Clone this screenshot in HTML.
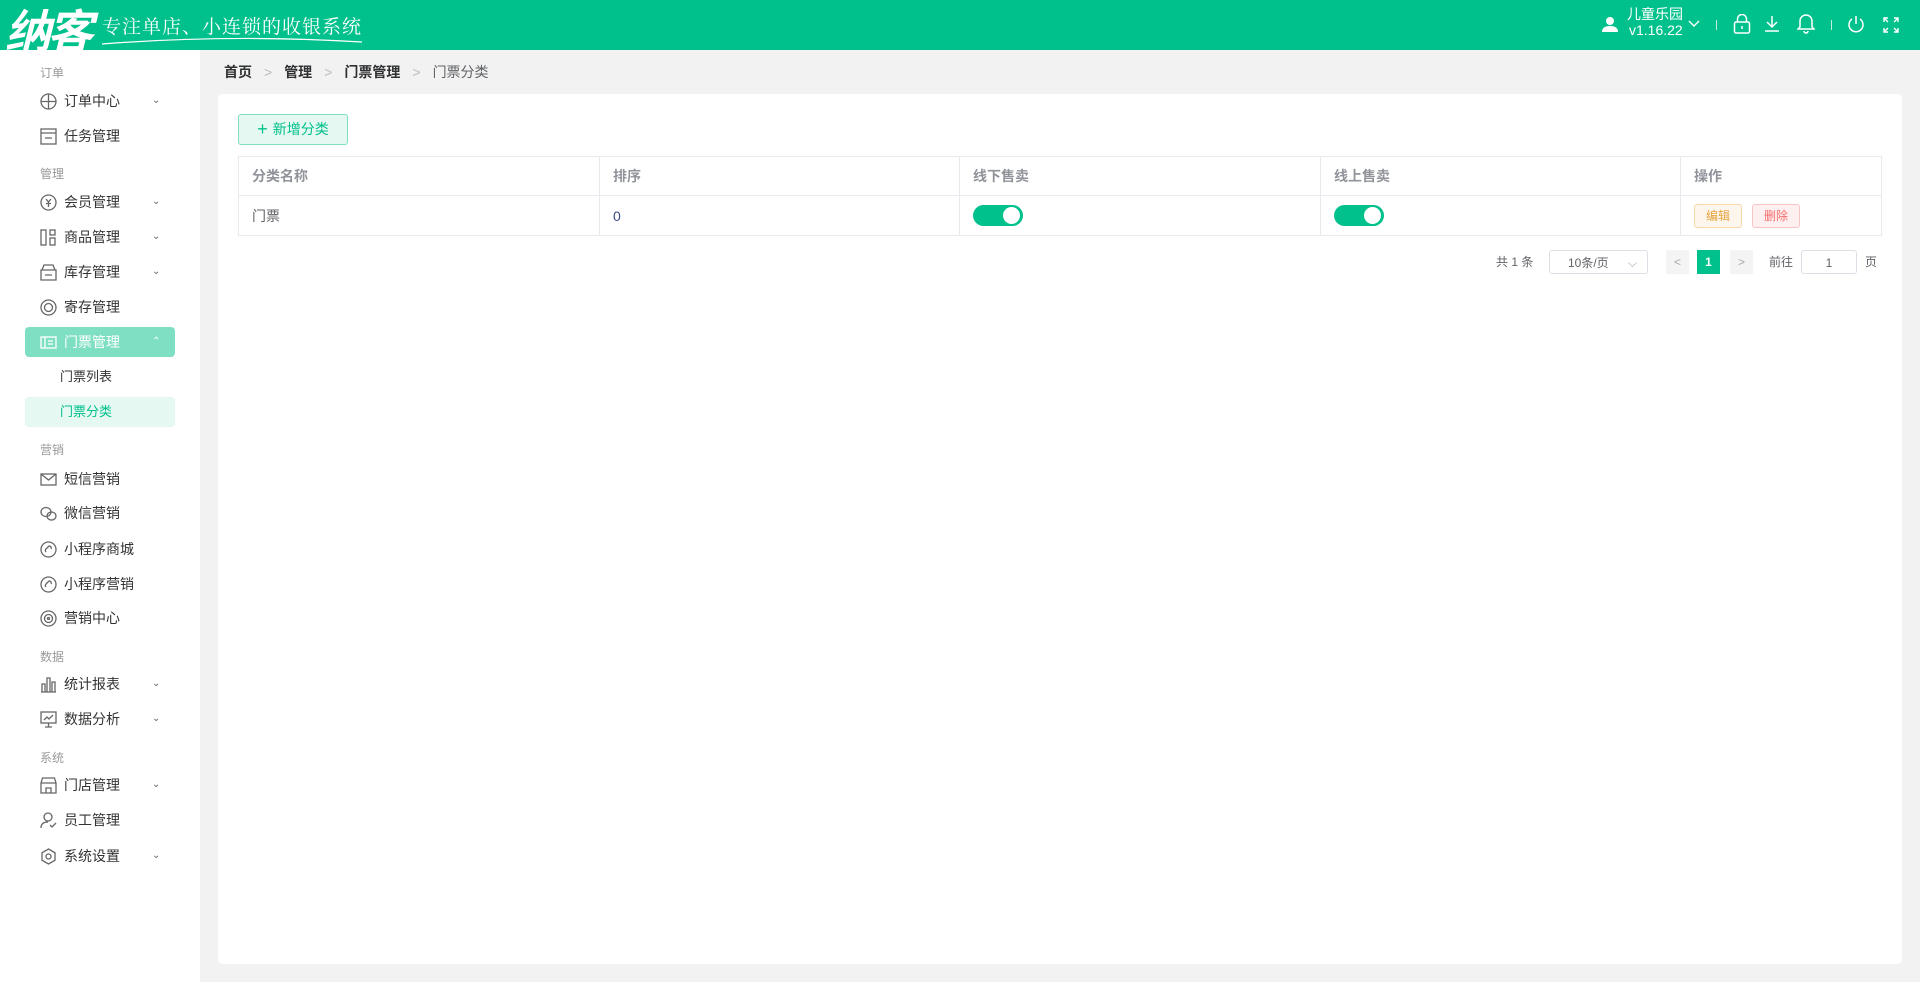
<!DOCTYPE html>
<html><head><meta charset="utf-8"><style>
*{margin:0;padding:0;box-sizing:border-box}
body{width:1920px;height:982px;overflow:hidden;background:#f2f2f2;font-family:"Liberation Sans","Noto Sans CJK SC",sans-serif;font-size:14px;color:#333;position:relative}
.hd{position:absolute;left:0;top:0;width:1920px;height:50px;background:#00c08b;color:#fff}
.abs{position:absolute}
.sb{position:absolute;left:0;top:50px;width:200px;height:932px;background:#fff}
.lbl{position:absolute;left:40px;font-size:12px;color:#999}
.it{position:absolute;left:40px;width:140px;height:30px;line-height:30px;font-size:14px;color:#333}
.it svg{position:absolute;left:0;top:7px}
.it span{position:absolute;left:24px}
.it i{position:absolute;left:112px;top:0;font-style:normal;font-size:10px;color:#666}
.card{position:absolute;left:218px;top:94px;width:1684px;height:870px;background:#fff;border-radius:4px}
table{position:absolute;left:238px;top:156px;width:1644px;border-collapse:collapse}
td,th{border:1px solid #e8eaf0;text-align:left;padding-left:13px;font-size:14px}
th{height:39px;color:#909399;font-weight:bold}
td{height:40px;color:#606266}
.sw{display:inline-block;width:50px;height:21px;border-radius:11px;background:#00c08b;position:relative;vertical-align:middle}
.sw:after{content:"";position:absolute;right:3px;top:2px;width:17px;height:17px;border-radius:50%;background:#fff}
.bt{display:inline-block;height:24px;line-height:22px;padding:0 11px;font-size:12px;border-radius:3px;margin-right:10px}
.pg{position:absolute;top:250px;height:24px;line-height:24px;font-size:12px;color:#606266}
.sep{color:#bbb;margin:0 12px;font-weight:normal}
</style></head><body>
<div class="hd">
 <div class="abs" style="left:5px;top:-4px;font-size:46px;font-weight:bold;font-style:italic;letter-spacing:-4px;font-family:'Noto Sans CJK SC',sans-serif">纳客</div>
 <div class="abs" style="left:102px;top:12px;font-size:19px;letter-spacing:1px;font-family:'Noto Serif CJK SC',serif">专注单店、小连锁的收银系统</div>
 <svg class="abs" style="left:100px;top:36px" width="265" height="10"><path d="M2 8 Q130 -2 262 6" stroke="#fff" stroke-width="1.2" fill="none"/></svg>
 <svg class="abs" style="left:1602px;top:16px" width="16" height="16" viewBox="0 0 16 16" fill="#fff"><circle cx="8" cy="5" r="4"/><path d="M0 16 Q0 10 8 10 Q16 10 16 16Z"/></svg>
 <div class="abs" style="left:1627px;top:6px;font-size:14px;line-height:16px">儿童乐园</div>
 <div class="abs" style="left:1629px;top:22px;font-size:14px;line-height:16px">v1.16.22</div>
 <svg class="abs" style="left:1688px;top:20px" width="12" height="8"><path d="M1 1 L6 6 L11 1" stroke="#fff" fill="none" stroke-width="1.4"/></svg>
 <div class="abs" style="left:1716px;top:20px;width:1px;height:10px;background:#bfeedd"></div>
 <svg class="abs" style="left:1733px;top:14px" width="18" height="20" viewBox="0 0 18 20" fill="none" stroke="#fff" stroke-width="1.5"><rect x="1.5" y="8" width="15" height="11" rx="1.5"/><path d="M4.5 8V5a4.5 4.5 0 0 1 9 0v3M9 12v3"/></svg>
 <svg class="abs" style="left:1764px;top:15px" width="16" height="18" fill="none" stroke="#fff" stroke-width="1.5"><path d="M8 1v11M3 7l5 5 5-5M1 16h14"/></svg>
 <svg class="abs" style="left:1797px;top:13px" width="18" height="21" fill="none" stroke="#fff" stroke-width="1.5"><path d="M9 2a6 6 0 0 0-6 6v6l-2 2h16l-2-2V8a6 6 0 0 0-6-6zM7 18a2 2 0 0 0 4 0"/></svg>
 <div class="abs" style="left:1831px;top:20px;width:1px;height:10px;background:#bfeedd"></div>
 <svg class="abs" style="left:1847px;top:15px" width="18" height="19" fill="none" stroke="#fff" stroke-width="1.5"><path d="M9 1v8M5 4a7 7 0 1 0 8 0"/></svg>
 <svg class="abs" style="left:1883px;top:17px" width="16" height="16" fill="none" stroke="#fff" stroke-width="1.4"><path d="M1 5V1h4M11 1h4v4M15 11v4h-4M5 15H1v-4M1 1l4 4M15 1l-4 4M15 15l-4-4M1 15l4-4"/></svg>
</div>

<div class="sb">
 <div class="lbl" style="top:14px">订单</div>
 <div class="it" style="top:36px"><svg width="17" height="17" fill="none" stroke="#666" stroke-width="1.3"><circle cx="8.5" cy="8.5" r="7.5"/><path d="M1 8.5h15M8.5 1v15"/></svg><span>订单中心</span><i>⌄</i></div>
 <div class="it" style="top:71px"><svg width="17" height="17" fill="none" stroke="#666" stroke-width="1.3"><rect x="1" y="1" width="15" height="15"/><path d="M1 5h15M5 10h7"/></svg><span>任务管理</span></div>
 <div class="lbl" style="top:115px">管理</div>
 <div class="it" style="top:137px"><svg width="17" height="17" fill="none" stroke="#666" stroke-width="1.3"><circle cx="8.5" cy="8.5" r="7.5"/><path d="M6 5l2.5 3 2.5-3M8.5 8v5M6 9.5h5"/></svg><span>会员管理</span><i>⌄</i></div>
 <div class="it" style="top:172px"><svg width="17" height="17" fill="none" stroke="#666" stroke-width="1.3"><rect x="1" y="1" width="5" height="15"/><rect x="10" y="1" width="5" height="5"/><rect x="10" y="9" width="5" height="7"/></svg><span>商品管理</span><i>⌄</i></div>
 <div class="it" style="top:207px"><svg width="17" height="17" fill="none" stroke="#666" stroke-width="1.3"><path d="M1 6h15v10H1zM2 6l2-5h9l2 5M5 11h7"/></svg><span>库存管理</span><i>⌄</i></div>
 <div class="it" style="top:242px"><svg width="17" height="17" fill="none" stroke="#666" stroke-width="1.3"><circle cx="8.5" cy="8.5" r="7.5"/><circle cx="8.5" cy="8.5" r="4"/></svg><span>寄存管理</span></div>
 <div class="abs" style="left:25px;top:277px;width:150px;height:30px;background:#7fdfc3;border-radius:4px"></div>
 <div class="it" style="top:277px;color:#fff"><svg width="17" height="17" fill="none" stroke="#fff" stroke-width="1.3"><rect x="1" y="3" width="15" height="11"/><path d="M5 3v11M8 7h5M8 10h5"/></svg><span>门票管理</span><i style="color:#fff">⌃</i></div>
 <div class="abs" style="left:60px;top:317px;font-size:13px;line-height:20px">门票列表</div>
 <div class="abs" style="left:25px;top:347px;width:150px;height:30px;background:#e5f8f2;border-radius:4px"></div>
 <div class="abs" style="left:60px;top:352px;font-size:13px;line-height:20px;color:#00c08b">门票分类</div>
 <div class="lbl" style="top:391px">营销</div>
 <div class="it" style="top:414px"><svg width="17" height="17" fill="none" stroke="#666" stroke-width="1.3"><rect x="1" y="3" width="15" height="11"/><path d="M1 3l7.5 6L16 3"/></svg><span>短信营销</span></div>
 <div class="it" style="top:448px"><svg width="17" height="17" fill="none" stroke="#666" stroke-width="1.3"><ellipse cx="6" cy="7" rx="5" ry="4.5"/><ellipse cx="11.5" cy="11" rx="4.5" ry="4"/></svg><span>微信营销</span></div>
 <div class="it" style="top:484px"><svg width="17" height="17" fill="none" stroke="#666" stroke-width="1.3"><circle cx="8.5" cy="8.5" r="7.5"/><path d="M6 11a2 2 0 0 1 0-3l3-3a2 2 0 0 1 2 3"/></svg><span>小程序商城</span></div>
 <div class="it" style="top:519px"><svg width="17" height="17" fill="none" stroke="#666" stroke-width="1.3"><circle cx="8.5" cy="8.5" r="7.5"/><path d="M6 11a2 2 0 0 1 0-3l3-3a2 2 0 0 1 2 3"/></svg><span>小程序营销</span></div>
 <div class="it" style="top:553px"><svg width="17" height="17" fill="none" stroke="#666" stroke-width="1.3"><circle cx="8.5" cy="8.5" r="7.5"/><circle cx="8.5" cy="8.5" r="4"/><circle cx="8.5" cy="8.5" r="1"/></svg><span>营销中心</span></div>
 <div class="lbl" style="top:598px">数据</div>
 <div class="it" style="top:619px"><svg width="17" height="17" fill="none" stroke="#666" stroke-width="1.3"><path d="M1 16h15M2 16V8h3v8M7 16V2h3v14M12 16V6h3v10"/></svg><span>统计报表</span><i>⌄</i></div>
 <div class="it" style="top:654px"><svg width="17" height="17" fill="none" stroke="#666" stroke-width="1.3"><rect x="1" y="1" width="15" height="11"/><path d="M5 16h7M8.5 12v4M4 9l3-3 2 2 4-4"/></svg><span>数据分析</span><i>⌄</i></div>
 <div class="lbl" style="top:699px">系统</div>
 <div class="it" style="top:720px"><svg width="17" height="17" fill="none" stroke="#666" stroke-width="1.3"><path d="M1 6l1.5-5h12L16 6v10H1zM1 6h15M6 16v-5h5v5"/></svg><span>门店管理</span><i>⌄</i></div>
 <div class="it" style="top:755px"><svg width="17" height="17" fill="none" stroke="#666" stroke-width="1.3"><circle cx="8" cy="5" r="4"/><path d="M1 16q0-6 7-6M10 13l2 2 4-4"/></svg><span>员工管理</span></div>
 <div class="it" style="top:791px"><svg width="17" height="17" fill="none" stroke="#666" stroke-width="1.3"><path d="M8.5 1l6.5 3.75v7.5L8.5 16 2 12.25v-7.5z"/><circle cx="8.5" cy="8.5" r="2.5"/></svg><span>系统设置</span><i>⌄</i></div>
</div>

<div class="abs" style="left:224px;top:62px;font-size:14px;line-height:20px;color:#303133"><b>首页</b><span class="sep">&gt;</span><b>管理</b><span class="sep">&gt;</span><b>门票管理</b><span class="sep">&gt;</span><span style="color:#606266">门票分类</span></div>

<div class="card"></div>
<div class="abs" style="left:238px;top:114px;width:110px;height:31px;border:1px solid #7fdfc3;background:#e5f8f2;border-radius:3px;color:#00c08b;font-size:14px;line-height:29px;text-align:center"><span style="font-size:18px;vertical-align:-1px;margin-right:5px">+</span>新增分类</div>
<table>
<tr><th style="width:361px">分类名称</th><th style="width:360px">排序</th><th style="width:361px">线下售卖</th><th style="width:360px">线上售卖</th><th>操作</th></tr>
<tr><td>门票</td><td style="color:#3a4a8a">0</td><td><span class="sw"></span></td><td><span class="sw"></span></td><td><span class="bt" style="border:1px solid #f8d8a8;background:#fdf6ec;color:#e6a23c">编辑</span><span class="bt" style="border:1px solid #fbc4c4;background:#fef0f0;color:#f56c6c">删除</span></td></tr>
</table>
<div class="pg" style="left:1496px">共 1 条</div>
<div class="pg" style="left:1549px;width:99px;border:1px solid #dcdfe6;border-radius:3px;padding-left:18px">10条/页<span style="position:absolute;right:10px;color:#aaa">⌵</span></div>
<div class="pg" style="left:1666px;width:23px;background:#f4f4f5;text-align:center;color:#aaa">&lt;</div>
<div class="pg" style="left:1697px;width:23px;background:#00c08b;text-align:center;color:#fff;font-weight:bold">1</div>
<div class="pg" style="left:1730px;width:23px;background:#f4f4f5;text-align:center;color:#aaa">&gt;</div>
<div class="pg" style="left:1769px">前往</div>
<div class="pg" style="left:1801px;width:56px;border:1px solid #dcdfe6;border-radius:3px;text-align:center">1</div>
<div class="pg" style="left:1865px">页</div>
</body></html>
